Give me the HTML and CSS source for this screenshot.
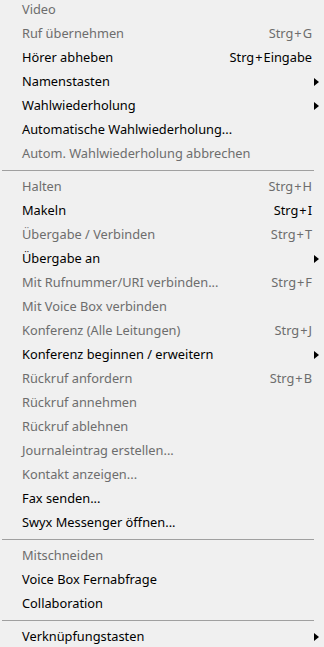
FILE: index.html
```html
<!DOCTYPE html>
<html lang="de">
<head>
    <meta charset="UTF-8">
    <meta name="viewport" content="width=device-width, initial-scale=1.0">
    <title>Kontextmenü</title>
    <link rel="stylesheet" href="styles.css">
</head>
<body>

<ul class="menu">
    <li class="item off"><span class="label">Video</span><span class="key"></span><span class="sub"></span></li>
    <li class="item off"><span class="label">Ruf übernehmen</span><span class="key">Strg<i>+</i>G</span><span class="sub"></span></li>
    <li class="item"><span class="label">Hörer abheben</span><span class="key">Strg<i>+</i>Eingabe</span><span class="sub"></span></li>
    <li class="item"><span class="label">Namenstasten</span><span class="key"></span><span class="sub arrow"></span></li>
    <li class="item"><span class="label">Wahlwiederholung</span><span class="key"></span><span class="sub arrow"></span></li>
    <li class="item"><span class="label">Automatische Wahlwiederholung...</span><span class="key"></span><span class="sub"></span></li>
    <li class="item off"><span class="label">Autom. Wahlwiederholung abbrechen</span><span class="key"></span><span class="sub"></span></li>
    <li class="sep"></li>
    <li class="item off"><span class="label">Halten</span><span class="key">Strg<i>+</i>H</span><span class="sub"></span></li>
    <li class="item"><span class="label">Makeln</span><span class="key">Strg<i>+</i>I</span><span class="sub"></span></li>
    <li class="item off"><span class="label">Übergabe / Verbinden</span><span class="key">Strg<i>+</i>T</span><span class="sub"></span></li>
    <li class="item"><span class="label">Übergabe an</span><span class="key"></span><span class="sub arrow"></span></li>
    <li class="item off"><span class="label">Mit Rufnummer/URI verbinden...</span><span class="key">Strg<i>+</i>F</span><span class="sub"></span></li>
    <li class="item off"><span class="label">Mit Voice Box verbinden</span><span class="key"></span><span class="sub"></span></li>
    <li class="item off"><span class="label">Konferenz (Alle Leitungen)</span><span class="key">Strg<i>+</i>J</span><span class="sub"></span></li>
    <li class="item"><span class="label">Konferenz beginnen / erweitern</span><span class="key"></span><span class="sub arrow"></span></li>
    <li class="item off"><span class="label">Rückruf anfordern</span><span class="key">Strg<i>+</i>B</span><span class="sub"></span></li>
    <li class="item off"><span class="label">Rückruf annehmen</span><span class="key"></span><span class="sub"></span></li>
    <li class="item off"><span class="label">Rückruf ablehnen</span><span class="key"></span><span class="sub"></span></li>
    <li class="item off"><span class="label">Journaleintrag erstellen...</span><span class="key"></span><span class="sub"></span></li>
    <li class="item off"><span class="label">Kontakt anzeigen...</span><span class="key"></span><span class="sub"></span></li>
    <li class="item"><span class="label">Fax senden...</span><span class="key"></span><span class="sub"></span></li>
    <li class="item"><span class="label">Swyx Messenger öffnen...</span><span class="key"></span><span class="sub"></span></li>
    <li class="sep"></li>
    <li class="item off"><span class="label">Mitschneiden</span><span class="key"></span><span class="sub"></span></li>
    <li class="item"><span class="label">Voice Box Fernabfrage</span><span class="key"></span><span class="sub"></span></li>
    <li class="item"><span class="label">Collaboration</span><span class="key"></span><span class="sub"></span></li>
    <li class="sep"></li>
    <li class="item"><span class="label">Verknüpfungstasten</span><span class="key"></span><span class="sub arrow"></span></li>
</ul>

</body>
</html>
```

FILE: styles.css
```css
body {
    margin: 0;
    background-color: #f0f0f0;
    font-family: "Noto Sans", "Open Sans", sans-serif;
    font-size: 12.8px;
    color: #000;
}
.menu {
    list-style: none;
    margin: -3px 0 0 0;
    padding: 0;
}
.item {
    display: flex;
    align-items: center;
    height: 24px;
    padding: 0 5px 0 22px;
    white-space: nowrap;
}
.item.off {
    color: #6d6d6d;
}
.label {
    flex: 1;
}
.key {
    text-align: right;
}
.key i {
    font-style: normal;
    margin: 0 1px;
}
.sub {
    width: 5px;
    height: 8px;
    margin-left: 2px;
}
.arrow {
    width: 0;
    height: 0;
    border-left: 5px solid #000;
    border-top: 4px solid transparent;
    border-bottom: 4px solid transparent;
    margin-top: 2px;
}
.sep {
    height: 9px;
    display: flex;
    align-items: center;
    padding: 0 10px 0 2px;
}
.sep::after {
    content: "";
    flex: 1;
    height: 1px;
    background-color: #a0a0a0;
    margin-top: 1px;
}
```
